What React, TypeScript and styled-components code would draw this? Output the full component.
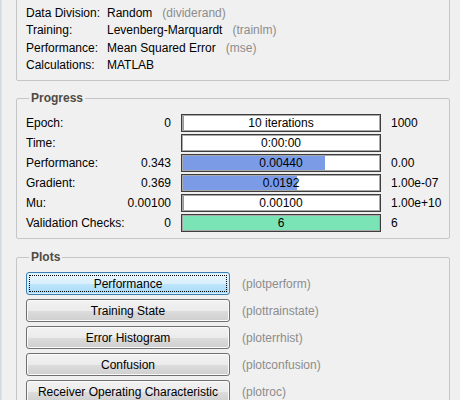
import React from 'react';
import styled, { createGlobalStyle } from 'styled-components';

const GlobalStyle = createGlobalStyle`
  html, body {
    margin: 0;
    padding: 0;
    background: #f0f0f0;
  }
  body {
    font-family: "Liberation Sans", Arial, sans-serif;
    font-size: 12px;
    color: #000;
  }
`;

const Frame = styled.div`
  display: flex;
  width: 460px;
  height: 400px;
  overflow: hidden;
  background: #f0f0f0;
`;

const LeftEdge = styled.div`
  width: 2px;
  flex: none;
  background: linear-gradient(to right, #c9d4e0, #e4e9ef);
`;

const RightEdge = styled.div`
  width: 1px;
  flex: none;
  background: #505660;
`;

const Content = styled.div`
  flex: 1;
  display: flex;
  flex-direction: column;
  padding: 0 12px 0 14px;
`;

const Group = styled.fieldset<{ $top?: number; $pad: string }>`
  margin: ${(p) => p.$top ?? 0}px 0 0 0;
  padding: ${(p) => p.$pad};
  border: 1px solid #c6c6c6;
  border-radius: 2px;
  min-width: 0;
`;

const Legend = styled.legend`
  margin-left: 3px;
  padding: 0 2px;
  font-weight: bold;
  font-size: 12px;
  line-height: 14px;
  color: #4e4a44;
`;

const InfoGrid = styled.div`
  display: grid;
  grid-template-columns: 81px 1fr;
  grid-auto-rows: 17.5px;
  align-items: center;
`;

const InfoValue = styled.div`
  display: flex;
  gap: 10px;
  white-space: nowrap;
`;

const Note = styled.span`
  color: #8c8c8c;
`;

const ProgressGrid = styled.div`
  display: grid;
  grid-template-columns: 145px 200px 1fr;
  grid-auto-rows: 18px;
  column-gap: 10px;
  row-gap: 2px;
  align-items: center;
`;

const LabelCell = styled.div`
  display: flex;
  justify-content: space-between;
  white-space: nowrap;
`;

const Bar = styled.div`
  height: 18px;
  box-sizing: border-box;
  border: 1px solid #3d3d3d;
  box-shadow: inset 0 0 0 1px #a9a9a9;
  padding: 1px;
  display: flex;
`;

const BarInner = styled.div<{ $pct: number; $color: string }>`
  flex: 1;
  display: flex;
  align-items: center;
  justify-content: center;
  background: linear-gradient(
    to right,
    ${(p) => p.$color} ${(p) => p.$pct}%,
    #ffffff ${(p) => p.$pct}%
  );
  font-size: 12px;
  line-height: 14px;
`;

const Limit = styled.div`
  white-space: nowrap;
`;

const PlotList = styled.div`
  display: flex;
  flex-direction: column;
  gap: 4px;
`;

const PlotRow = styled.div`
  display: flex;
  align-items: center;
  gap: 12px;
`;

const PlotButton = styled.button<{ $focused?: boolean }>`
  position: relative;
  width: 204px;
  height: 23px;
  box-sizing: border-box;
  padding: 0;
  font-family: "Liberation Sans", Arial, sans-serif;
  font-size: 12px;
  color: #000;
  border-radius: 3px;
  border: 1px solid ${(p) => (p.$focused ? '#3c7fb1' : '#707070')};
  box-shadow: inset 0 0 0 1px ${(p) => (p.$focused ? '#d6eefb' : '#fbfbfb')};
  background: ${(p) =>
    p.$focused
      ? 'linear-gradient(#eaf6fd 0%, #d9f0fc 50%, #bee6fd 51%, #a7d9f5 100%)'
      : 'linear-gradient(#f2f2f2 0%, #ebebeb 50%, #dddddd 51%, #cfcfcf 100%)'};

  &::after {
    content: '';
    display: ${(p) => (p.$focused ? 'block' : 'none')};
    position: absolute;
    inset: 2px;
    border: 1px dotted #000;
  }
`;

const info = [
  { label: 'Data Division:', value: 'Random', note: '(dividerand)' },
  { label: 'Training:', value: 'Levenberg-Marquardt', note: '(trainlm)' },
  { label: 'Performance:', value: 'Mean Squared Error', note: '(mse)' },
  { label: 'Calculations:', value: 'MATLAB', note: '' },
];

const BLUE = '#7b9be6';
const GREEN = '#7ae4b7';

const progress = [
  { label: 'Epoch:', start: '0', text: '10 iterations', end: '1000', pct: 0.6, color: BLUE },
  { label: 'Time:', start: '', text: '0:00:00', end: '', pct: 0, color: BLUE },
  { label: 'Performance:', start: '0.343', text: '0.00440', end: '0.00', pct: 72.6, color: BLUE },
  { label: 'Gradient:', start: '0.369', text: '0.0192', end: '1.00e-07', pct: 58.2, color: BLUE },
  { label: 'Mu:', start: '0.00100', text: '0.00100', end: '1.00e+10', pct: 0.4, color: BLUE },
  { label: 'Validation Checks:', start: '0', text: '6', end: '6', pct: 100, color: GREEN },
];

const plots = [
  { name: 'Performance', fn: '(plotperform)', focused: true },
  { name: 'Training State', fn: '(plottrainstate)' },
  { name: 'Error Histogram', fn: '(ploterrhist)' },
  { name: 'Confusion', fn: '(plotconfusion)' },
  { name: 'Receiver Operating Characteristic', fn: '(plotroc)' },
];

const App = () => {
  return (
    <>
      <GlobalStyle />
      <Frame>
        <LeftEdge />
        <Content>
          <Group $top={-20} $pad="23px 8px 6px 9px">
            <InfoGrid>
              {info.map((r) => (
                <React.Fragment key={r.label}>
                  <div>{r.label}</div>
                  <InfoValue>
                    <span>{r.value}</span>
                    {r.note && <Note>{r.note}</Note>}
                  </InfoValue>
                </React.Fragment>
              ))}
            </InfoGrid>
          </Group>

          <Group $top={10} $pad="9px 8px 6px 9px">
            <Legend>Progress</Legend>
            <ProgressGrid>
              {progress.map((r) => (
                <React.Fragment key={r.label}>
                  <LabelCell>
                    <span>{r.label}</span>
                    <span>{r.start}</span>
                  </LabelCell>
                  <Bar>
                    <BarInner $pct={r.pct} $color={r.color}>
                      {r.text}
                    </BarInner>
                  </Bar>
                  <Limit>{r.end}</Limit>
                </React.Fragment>
              ))}
            </ProgressGrid>
          </Group>

          <Group $top={11} $pad="8px 8px 10px 9px">
            <Legend>Plots</Legend>
            <PlotList>
              {plots.map((p) => (
                <PlotRow key={p.name}>
                  <PlotButton $focused={p.focused}>{p.name}</PlotButton>
                  <Note>{p.fn}</Note>
                </PlotRow>
              ))}
            </PlotList>
          </Group>
        </Content>
        <RightEdge />
      </Frame>
    </>
  );
};

export default App;
